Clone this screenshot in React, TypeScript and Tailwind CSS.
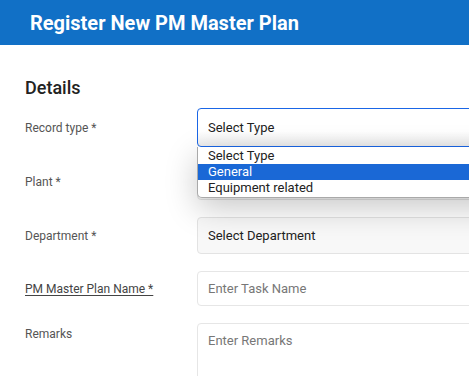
import { memo } from 'react'

// ── Form rows ─────────────────────────────────────────────────────────────────

const TYPE_OPTIONS = ['Select Type', 'General', 'Equipment related'] as const

const Label = memo(function Label({ text, underline }: { text: string; underline?: boolean }) {
    return (
        <div className="w-[172px] shrink-0 text-[12px] text-[#555]">
            <span className={underline ? 'underline underline-offset-2 text-[#444]' : ''}>{text}</span>
        </div>
    )
})

export default function App() {
    return (
        <div className="w-[469px] h-[376px] overflow-hidden bg-white font-['Roboto',sans-serif]">
            {/* Header */}
            <div className="h-[45px] bg-[#1170c6] flex items-center pl-[30px]">
                <h1 className="text-white text-[20px] font-bold">Register New PM Master Plan</h1>
            </div>

            {/* Body */}
            <div className="w-[640px] pl-[25px] pt-[31px]">
                <h2 className="text-[18px] font-medium text-[#222] leading-[24px] mb-[8px]">Details</h2>

                {/* Record type */}
                <div className="flex items-center h-[39px] mb-[16px]">
                    <Label text="Record type *" />
                    <div className="relative flex-1 h-full">
                        <div className="h-full rounded-[4px] border border-[#1a66e6] bg-gradient-to-b from-white from-60% to-[#ececec] flex items-center pl-[10px] text-[13px] text-[#222]">
                            Select Type
                        </div>
                        {/* Open list */}
                        <div className="absolute left-0 right-0 top-[39px] z-10 bg-white border border-[#a9a9a9] border-t-0 rounded-b-[5px] pt-[1px] pb-[1px] shadow-[0_10px_32px_rgba(0,0,0,0.22)]">
                            {TYPE_OPTIONS.map((opt) => (
                                <div
                                    key={opt}
                                    className={
                                        opt === 'General'
                                            ? 'h-[16px] leading-[16px] pl-[10px] text-[13px] bg-[#1a68d6] text-white'
                                            : 'h-[16px] leading-[16px] pl-[10px] text-[13px] text-[#222]'
                                    }
                                >
                                    {opt}
                                </div>
                            ))}
                        </div>
                    </div>
                </div>

                {/* Plant (its value sits under the open list) */}
                <div className="flex items-center h-[37px] mb-[17px]">
                    <Label text="Plant *" />
                    <div className="flex-1 h-full rounded-[4px] border border-[#e3e3e3] bg-[#f8f8f8]" />
                </div>

                {/* Department */}
                <div className="flex items-center h-[37px] mb-[17px]">
                    <Label text="Department *" />
                    <div className="flex-1 h-full rounded-[4px] border border-[#e3e3e3] bg-[#f8f8f8] flex items-center pl-[10px] text-[13px] text-[#222]">
                        Select Department
                    </div>
                </div>

                {/* Name */}
                <div className="flex items-center h-[35px] mb-[17px]">
                    <Label text="PM Master Plan Name *" underline />
                    <div className="flex-1 h-full rounded-[4px] border border-[#e6e6e6] bg-white flex items-center pl-[10px] text-[13px] text-[#777]">
                        Enter Task Name
                    </div>
                </div>

                {/* Remarks */}
                <div className="flex items-start">
                    <div className="pt-[2px]">
                        <Label text="Remarks" />
                    </div>
                    <div className="flex-1 h-[80px] rounded-[4px] border border-[#e6e6e6] bg-white pl-[10px] pt-[7px] text-[13px] text-[#777]">
                        Enter Remarks
                    </div>
                </div>
            </div>
        </div>
    )
}
